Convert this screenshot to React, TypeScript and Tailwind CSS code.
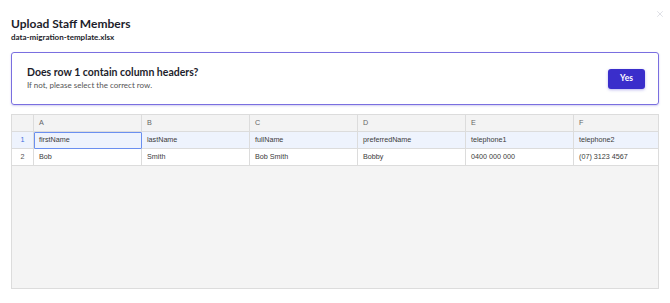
import { X } from 'lucide-react'

const columns = ['A', 'B', 'C', 'D', 'E', 'F']

const rows = [
	['firstName', 'lastName', 'fullName', 'preferredName', 'telephone1', 'telephone2'],
	['Bob', 'Smith', 'Bob Smith', 'Bobby', '0400 000 000', '(07) 3123 4567'],
]

const cols = 'grid grid-cols-[22px_108px_108px_108px_108px_108px_1fr]'

export default function App() {
	return (
		<div className="relative w-[670px] h-[303px] bg-white px-[11px] pt-[17px] font-['Lato',sans-serif] text-[#1d1d2b]">
			<button className="absolute right-[5px] top-[9px] text-[#c3c6d1]">
				<X size={10} strokeWidth={1.3} />
			</button>

			<h1 className="text-[12px] font-bold leading-[14px]">Upload Staff Members</h1>
			<p className="text-[8px] font-bold leading-[10px] mt-[1px]">data-migration-template.xlsx</p>

			<section className="mt-[10px] h-[53px] border-[1.5px] border-[#7a6fe0] rounded-[3px] flex items-center justify-between pl-[15px] pr-[13px] shadow-[0_1px_2px_rgba(80,70,200,0.25)]">
				<div className="flex flex-col">
					<h2 className="text-[10.5px] font-bold leading-[13px]">Does row 1 contain column headers?</h2>
					<p className="text-[8px] text-[#555] leading-[11px] mt-[1px]">If not, please select the correct row.</p>
				</div>
				<button className="w-[37px] h-[20px] rounded-[3px] bg-[#3a2ecb] text-white text-[8.5px] font-bold shadow-[0_1px_3px_rgba(58,46,203,0.35)]">
					Yes
				</button>
			</section>

			<div className="mt-[9px] h-[175px] border border-[#dcdcdc] bg-[#f4f4f4] font-['Liberation_Sans',sans-serif] text-[7.2px] text-[#3a3a3a] overflow-hidden">
				<div className={`${cols} h-[17px] bg-[#f3f3f3] text-[#666]`}>
					<div className="border-r border-b border-[#dcdcdc]" />
					{columns.map((c) => (
						<div key={c} className="flex items-center pl-[5px] border-r border-b border-[#dcdcdc] last:border-r-0">
							{c}
						</div>
					))}
				</div>
				{rows.map((row, i) => (
					<div key={i} className={`${cols} h-[17px] ${i === 0 ? 'bg-[#eef3fd]' : 'bg-white'}`}>
						<div
							className={`flex items-center justify-center border-r border-b border-[#dcdcdc] ${
								i === 0 ? 'text-[#3d6fe0]' : 'text-[#555]'
							}`}
						>
							{i + 1}
						</div>
						{row.map((cell, j) => (
							<div
								key={j}
								className={`flex items-center pl-[5px] border-r border-b border-[#dcdcdc] last:border-r-0 whitespace-nowrap ${
									i === 0 && j === 0 ? 'outline outline-[1.5px] outline-[#6a8ff0] -outline-offset-1 rounded-[1px]' : ''
								}`}
							>
								{cell}
							</div>
						))}
					</div>
				))}
			</div>
		</div>
	)
}
